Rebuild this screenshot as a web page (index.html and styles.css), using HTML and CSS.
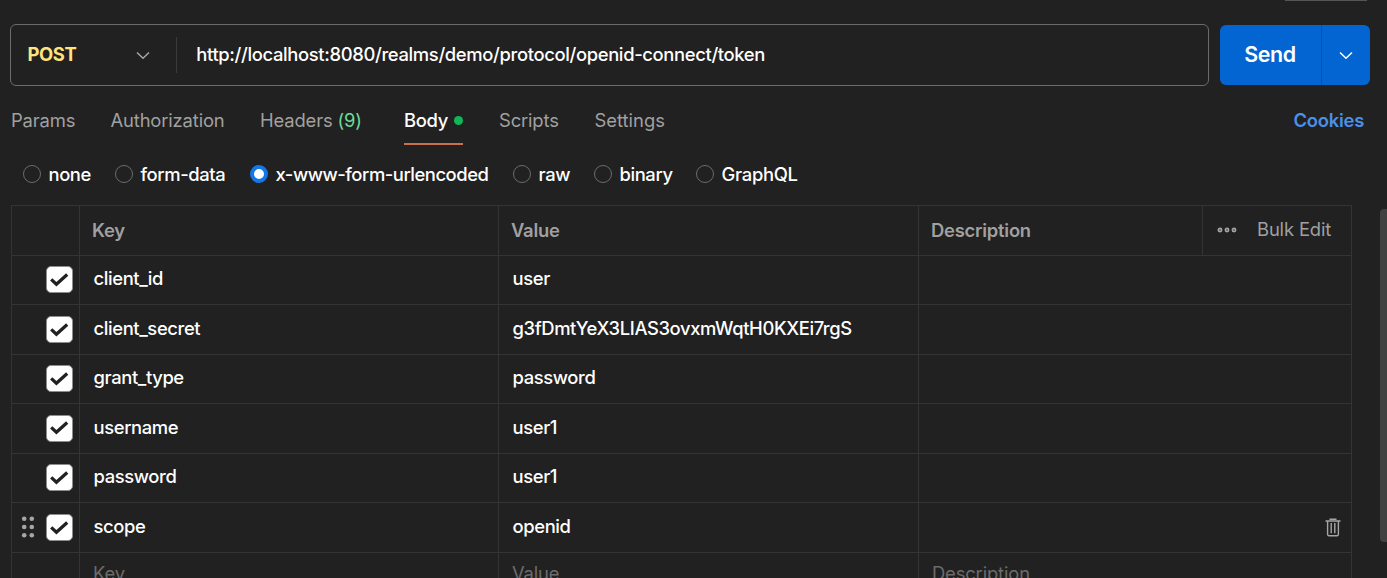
FILE: index.html
```html
<!DOCTYPE html>
<html lang="en">
<head>
<meta charset="utf-8">
<title>API request</title>
<link rel="stylesheet" href="styles.css">
</head>
<body>
<svg class="defs" width="0" height="0" aria-hidden="true">
  <symbol id="chevron" viewBox="0 0 14 9"><path d="M1 1.5 7 7.3 13 1.5" fill="none" stroke="currentColor" stroke-width="1.5"/></symbol>
  <symbol id="check" viewBox="0 0 20 16"><path d="M1.2 7.4 6.4 12.2 17.2 2.6" fill="none" stroke="#212121" stroke-width="3.3"/></symbol>
</svg>
<div class="cut-edge"></div>
<main class="request">
  <div class="url-row">
    <div class="url-box">
      <div class="method"><span>POST</span><svg class="chev"><use href="#chevron"/></svg></div>
      <div class="url">http://localhost:8080/realms/demo/protocol/openid-connect/token</div>
    </div>
    <div class="send">
      <button class="send-main">Send</button>
      <button class="send-more" aria-label="Send options"><svg class="chev"><use href="#chevron"/></svg></button>
    </div>
  </div>
  <nav class="tabs">
    <a class="tab t-params">Params</a>
    <a class="tab t-auth">Authorization</a>
    <a class="tab t-headers">Headers <span class="count">(9)</span></a>
    <a class="tab t-body active">Body<i class="dot"></i></a>
    <a class="tab t-scripts">Scripts</a>
    <a class="tab t-settings">Settings</a>
    <a class="cookies">Cookies</a>
  </nav>
  <div class="modes">
    <label class="mode m-none"><i class="radio"></i>none</label>
    <label class="mode m-form"><i class="radio"></i>form-data</label>
    <label class="mode m-url"><i class="radio on"></i>x-www-form-urlencoded</label>
    <label class="mode m-raw"><i class="radio"></i>raw</label>
    <label class="mode m-bin"><i class="radio"></i>binary</label>
    <label class="mode m-gql"><i class="radio"></i>GraphQL</label>
  </div>
  <div class="content">
    <div class="table">
      <div class="row head">
        <div class="cell"></div><div class="cell">Key</div><div class="cell">Value</div><div class="cell">Description</div>
        <div class="cell tools"><svg class="more" viewBox="0 0 20 6"><g fill="none" stroke="#a6a6a6" stroke-width="1.7"><circle cx="3" cy="3" r="1.6"/><circle cx="10" cy="3" r="1.6"/><circle cx="17" cy="3" r="1.6"/></g></svg><span>Bulk Edit</span></div>
      </div>
      <div class="row"><div class="cell pick"><i class="box"><svg><use href="#check"/></svg></i></div><div class="cell">client_id</div><div class="cell">user</div><div class="cell last"></div></div>
      <div class="row"><div class="cell pick"><i class="box"><svg><use href="#check"/></svg></i></div><div class="cell">client_secret</div><div class="cell secret">g3fDmtYeX3LIAS3ovxmWqtH0KXEi7rgS</div><div class="cell last"></div></div>
      <div class="row"><div class="cell pick"><i class="box"><svg><use href="#check"/></svg></i></div><div class="cell">grant_type</div><div class="cell">password</div><div class="cell last"></div></div>
      <div class="row"><div class="cell pick"><i class="box"><svg><use href="#check"/></svg></i></div><div class="cell">username</div><div class="cell">user1</div><div class="cell last"></div></div>
      <div class="row"><div class="cell pick"><i class="box"><svg><use href="#check"/></svg></i></div><div class="cell">password</div><div class="cell">user1</div><div class="cell last"></div></div>
      <div class="row"><div class="cell pick">
        <svg class="grip" viewBox="0 0 14 22" fill="#a6a6a6"><circle cx="3.2" cy="2.8" r="2.3"/><circle cx="10.8" cy="2.8" r="2.3"/><circle cx="3.2" cy="11" r="2.3"/><circle cx="10.8" cy="11" r="2.3"/><circle cx="3.2" cy="19.2" r="2.3"/><circle cx="10.8" cy="19.2" r="2.3"/></svg>
        <i class="box"><svg><use href="#check"/></svg></i></div><div class="cell">scope</div><div class="cell">openid</div>
        <div class="cell last"><svg class="trash" viewBox="0 0 16 19" fill="none" stroke="#a6a6a6" stroke-width="1.4"><path d="M0.5 3H15.5M5.2 2V1.2H10.8V2M2.6 3V16.6Q2.6 17.7 3.8 17.7H12.2Q13.4 17.7 13.4 16.6V3M6.2 5V15.2M9.8 5V15.2"/></svg></div></div>
      <div class="row ghost"><div class="cell"></div><div class="cell">Key</div><div class="cell">Value</div><div class="cell last">Description</div></div>
    </div>
    <div class="scrollbar"></div>
  </div>
</main>
</body>
</html>
```

FILE: styles.css
```css
* { box-sizing: border-box; }
body {
  margin: 0;
  height: 578px;
  overflow: hidden;
  background: #212121;
  color: #fff;
  font: 400 18.4px/24px Inter, "Liberation Sans", sans-serif;
}
.defs { position: absolute; }
.cut-edge { width: 82px; height: 1px; margin-left: 1285px; background: #555; }
.request { padding: 23px 0 0 10px; }
.url-row { display: flex; gap: 11px; height: 62px; align-items: center; }
.url-box {
  display: flex;
  align-items: center;
  width: 1199px;
  height: 62px;
  border: 1px solid #6b6b6b;
  border-radius: 6px;
}
.method {
  display: flex;
  align-items: center;
  justify-content: space-between;
  width: 166px;
  height: 36px;
  padding: 0 26px 0 16.5px;
  border-right: 1px solid #3a3a3a;
  color: #ffe47e;
  font-weight: 700;
  letter-spacing: -0.4px;
}
.method span { padding-bottom: 2px; }
.chev { width: 14px; height: 9px; color: #a6a6a6; }
.url { padding: 0 0 2px 19.3px; font-weight: 450; letter-spacing: -0.35px; white-space: nowrap; }
.send { display: flex; width: 150px; height: 60px; border-radius: 6px; overflow: hidden; background: #0265d2; }
.send button { border: 0; padding: 0; background: none; color: #fff; font: 600 21.4px/28px Inter, sans-serif; letter-spacing: -0.4px; }
.send .send-main { width: 101px; padding: 0 1px 2px 0; }
.send .send-more { flex: 1; border-left: 1px solid #0552a8; display: flex; align-items: center; justify-content: center; }
.send-more .chev { color: #fff; }

.tabs { display: flex; height: 59px; padding-left: 1px; color: #a0a0a0; }
.tab { height: 59px; padding-top: 22px; letter-spacing: -0.15px; white-space: nowrap; }
.t-params { width: 99.5px; }
.t-auth { width: 149.5px; }
.t-headers { width: 144px; }
.t-body { width: 59px; margin-right: 36px; }
.t-scripts { width: 95.5px; }
.t-settings { letter-spacing: 0; }
.count { color: #6bdd9a; }
.active { display: flex; justify-content: space-between; border-bottom: 2px solid #c8704c; color: #fff; font-weight: 450; letter-spacing: -0.3px; }
.dot { width: 9px; height: 9px; margin-top: 8px; border-radius: 50%; background: #10b759; }
.cookies { margin: 22px 23px 0 auto; color: #4a90e8; font-weight: 600; letter-spacing: -0.25px; }

.modes { display: flex; height: 60px; padding: 17px 0 0 13px; font-weight: 450; letter-spacing: -0.4px; }
.mode { display: flex; align-items: flex-start; white-space: nowrap; }
.m-none { width: 92px; }
.m-form { width: 135px; }
.m-url { width: 263px; letter-spacing: -0.46px; }
.m-raw { width: 81px; }
.m-bin { width: 102px; }
.m-gql { letter-spacing: -0.28px; }
.radio { width: 18px; height: 18px; margin: 3px 7.5px 0 0; border: 1px solid #6b6b6b; border-radius: 50%; }
.radio.on { border: 4px solid #1477e8; background: #fff; }

.content { display: flex; justify-content: space-between; height: 373px; padding-left: 1px; overflow: hidden; }
.table { width: 1341px; height: 400px; border: 1px solid #343434; border-bottom: 0; font-weight: 450; letter-spacing: -0.38px; }
.row { display: grid; grid-template-columns: 68px 419px 420px 284px 148px; height: 49px; border-bottom: 1px solid #343434; }
.row:nth-child(odd) { height: 50px; }
.cell { padding: 11px 13.5px; border-right: 1px solid #343434; white-space: nowrap; }
.row:nth-child(2) .cell, .row:nth-child(4) .cell, .row:nth-child(6) .cell { padding-top: 10px; }
.cell:last-child { border-right: 0; }
.last { grid-column: span 2; }
.head { color: #a0a0a0; font-weight: 600; letter-spacing: -0.24px; }
.head .cell { padding: 12px 12px; }
.head .tools { display: flex; align-items: center; gap: 20px; padding: 0 0 2px 14px; font-weight: 400; letter-spacing: -0.15px; }
.head .tools span { padding-bottom: 1px; }
.more { width: 20px; height: 6px; }
.row .pick, .row:nth-child(even) .pick { display: flex; justify-content: flex-end; align-items: center; gap: 11px; padding: 0 6px 1px 0; }
.box { display: flex; align-items: center; justify-content: center; width: 27px; height: 27px; border: 1px solid #8d8d8d; border-radius: 5px; background: #fff; }
.row:nth-child(3) .pick, .row:nth-child(7) .pick { padding-bottom: 0; }
.box svg { width: 20px; height: 16px; }
.grip { width: 14px; height: 22px; margin-bottom: 1px; }
.last:has(.trash) { display: flex; align-items: center; justify-content: flex-end; padding: 0 10px 1px 0; }
.trash { width: 16px; height: 19px; }
.ghost { color: #6b6b6b; font-weight: 400; letter-spacing: -0.15px; }
.ghost .cell { padding: 8px 13px; }
.scrollbar { width: 7px; height: 333px; margin-top: 4px; border-radius: 4px 0 0 4px; background: #414141; }
```
